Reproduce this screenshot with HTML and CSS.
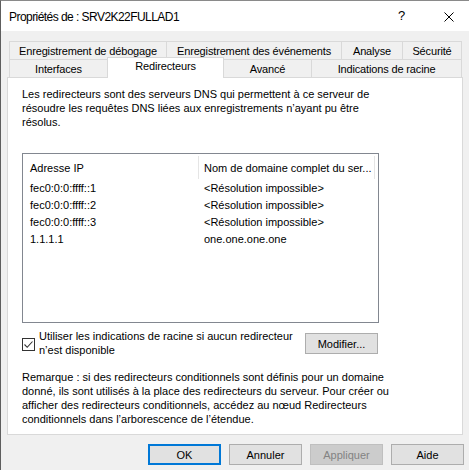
FILE: index.html
```html
<!DOCTYPE html>
<html lang="fr">
<head>
<meta charset="utf-8">
<title>Propriétés de : SRV2K22FULLAD1</title>
<link rel="stylesheet" href="styles.css">
</head>
<body>
<div class="window">
  <div class="titlebar">
    <span class="title">Propriétés de : SRV2K22FULLAD1</span>
    <span class="help">?</span>
    <span class="close"><svg width="10" height="10" viewBox="0 0 10 10"><path d="M0.5 0.5 L9.5 9.5 M9.5 0.5 L0.5 9.5" stroke="#000" stroke-width="1" fill="none"/></svg></span>
  </div>
  <div class="content">
    <div class="tabs">
      <div class="tabrow">
        <div class="tab w1">Enregistrement de débogage</div>
        <div class="tab w2">Enregistrement des événements</div>
        <div class="tab w3">Analyse</div>
        <div class="tab w4">Sécurité</div>
      </div>
      <div class="tabrow row2">
        <div class="tab w5">Interfaces</div>
        <div class="tab w6 selected">Redirecteurs</div>
        <div class="tab w7">Avancé</div>
        <div class="tab w8">Indications de racine</div>
      </div>
    </div>
    <div class="panel">
      <p class="desc">Les redirecteurs sont des serveurs DNS qui permettent à ce serveur de<br>résoudre les requêtes DNS liées aux enregistrements n’ayant pu être<br>résolus.</p>
      <div class="listbox">
        <div class="lrow header">
          <div class="c1">Adresse IP</div>
          <div class="c2">Nom de domaine complet du ser...</div>
        </div>
        <div class="lrow"><div class="c1">fec0:0:0:ffff::1</div><div class="c2">&lt;Résolution impossible&gt;</div></div>
        <div class="lrow"><div class="c1">fec0:0:0:ffff::2</div><div class="c2">&lt;Résolution impossible&gt;</div></div>
        <div class="lrow"><div class="c1">fec0:0:0:ffff::3</div><div class="c2">&lt;Résolution impossible&gt;</div></div>
        <div class="lrow"><div class="c1">1.1.1.1</div><div class="c2">one.one.one.one</div></div>
      </div>
      <div class="optrow">
        <div class="check">
          <span class="box"><svg width="11" height="11" viewBox="0 0 11 11"><path d="M1.5 5.5 L4.2 8.3 L9.5 2.5" stroke="#333" stroke-width="1.1" fill="none"/></svg></span>
          <span class="checklabel">Utiliser les indications de racine si aucun redirecteur<br>n’est disponible</span>
        </div>
        <button class="btn modify">Modifier...</button>
      </div>
      <p class="note">Remarque : si des redirecteurs conditionnels sont définis pour un domaine<br>donné, ils sont utilisés à la place des redirecteurs du serveur. Pour créer ou<br>afficher des redirecteurs conditionnels, accédez au nœud Redirecteurs<br>conditionnels dans l’arborescence de l’étendue.</p>
    </div>
    <div class="buttons">
      <button class="btn default">OK</button>
      <button class="btn">Annuler</button>
      <button class="btn disabled">Appliquer</button>
      <button class="btn">Aide</button>
    </div>
  </div>
</div>
</body>
</html>
```

FILE: styles.css
```css
* { box-sizing: border-box; }
html, body { margin: 0; padding: 0; }
body {
  width: 469px;
  height: 470px;
  overflow: hidden;
  background: #f0f0f0;
  font-family: "Liberation Sans", Arial, sans-serif;
  font-size: 11px;
  color: #000;
}
.window {
  width: 469px;
  height: 470px;
  border-left: 1px solid #5e5e5e;
  border-top: 1px solid #8a8a8a;
  background: #f0f0f0;
}
.titlebar {
  height: 30px;
  background: #fff;
  display: flex;
  align-items: center;
  padding-left: 8px;
}
.title {
  font-size: 12px;
  letter-spacing: -0.55px;
  flex: 1;
  padding-top: 1px;
}
.help {
  font-size: 13px;
  width: 10px;
  margin-right: 36px;
  padding-bottom: 1px;
}
.close {
  width: 10px;
  height: 10px;
  margin-right: 15px;
  display: flex;
  margin-top: 1px;
}
.content {
  padding: 10px 0 0 6px;
}
.tabs {
  margin-left: 2px;
}
.tabrow {
  display: flex;
  height: 18px;
}
.row2 { align-items: flex-end; }
.tab {
  height: 18px;
  border: 1px solid #d9d9d9;
  border-bottom: none;
  background: #f0f0f0;
  text-align: center;
  line-height: 18px;
  white-space: nowrap;
  letter-spacing: -0.15px;
}
.tab + .tab { margin-left: -1px; }
.w1 { width: 158px; }
.w2 { width: 176px; }
.w3 { width: 62px; }
.w4 { width: 60px; }
.w5 { width: 99px; }
.w6 { width: 117px; }
.w7 { width: 89px; }
.w8 { width: 151px; }
.tab.selected {
  position: relative;
  z-index: 1;
  height: 21px;
  margin-top: -2px;
  margin-bottom: -1px;
  background: #fff;
  line-height: 17px;
}
.panel {
  width: 456px;
  height: 358px;
  background: #fff;
  border: 1px solid #d9d9d9;
  padding: 9px 14px 0 14px;
}
.desc {
  margin: 0;
  line-height: 14px;
}
.listbox {
  margin-top: 24px;
  width: 357px;
  height: 170px;
  border: 1px solid #828790;
}
.lrow {
  display: flex;
  height: 17px;
  line-height: 17px;
}
.lrow.header {
  height: 26px;
  line-height: 26px;
}
.c1 {
  width: 176px;
  padding-left: 7px;
  white-space: nowrap;
}
.c2 {
  padding-left: 5px;
  white-space: nowrap;
}
.header .c1 {
  border-right: 1px solid #e5e5e5;
  height: 23px;
  margin-top: 2px;
  line-height: 24px;
}
.header .c2 {
  width: 176px;
  border-right: 1px solid #e5e5e5;
  height: 23px;
  margin-top: 2px;
  line-height: 24px;
}
.optrow {
  display: flex;
  align-items: flex-start;
  margin-top: 6px;
}
.check {
  display: flex;
  align-items: flex-start;
  width: 283px;
}
.box {
  width: 13px;
  height: 13px;
  border: 1px solid #333;
  background: #fff;
  margin-top: 9px;
  margin-right: 4px;
  display: flex;
  align-items: center;
  justify-content: center;
  flex: none;
}
.checklabel {
  line-height: 14px;
}
.btn {
  font-family: "Liberation Sans", Arial, sans-serif;
  font-size: 11px;
  color: #000;
  width: 73px;
  height: 21px;
  background: #e1e1e1;
  border: 1px solid #adadad;
  padding: 0;
  margin: 0;
}
.modify {
  margin-top: 4px;
}
.note {
  margin: 13px 0 0 0;
  line-height: 14px;
}
.buttons {
  display: flex;
  gap: 8px;
  margin-top: 9px;
  padding-left: 141px;
}
.btn.default {
  border: 2px solid #0078d7;
}
.btn.disabled {
  background: #cccccc;
  border-color: #bfbfbf;
  color: #838383;
}
```
